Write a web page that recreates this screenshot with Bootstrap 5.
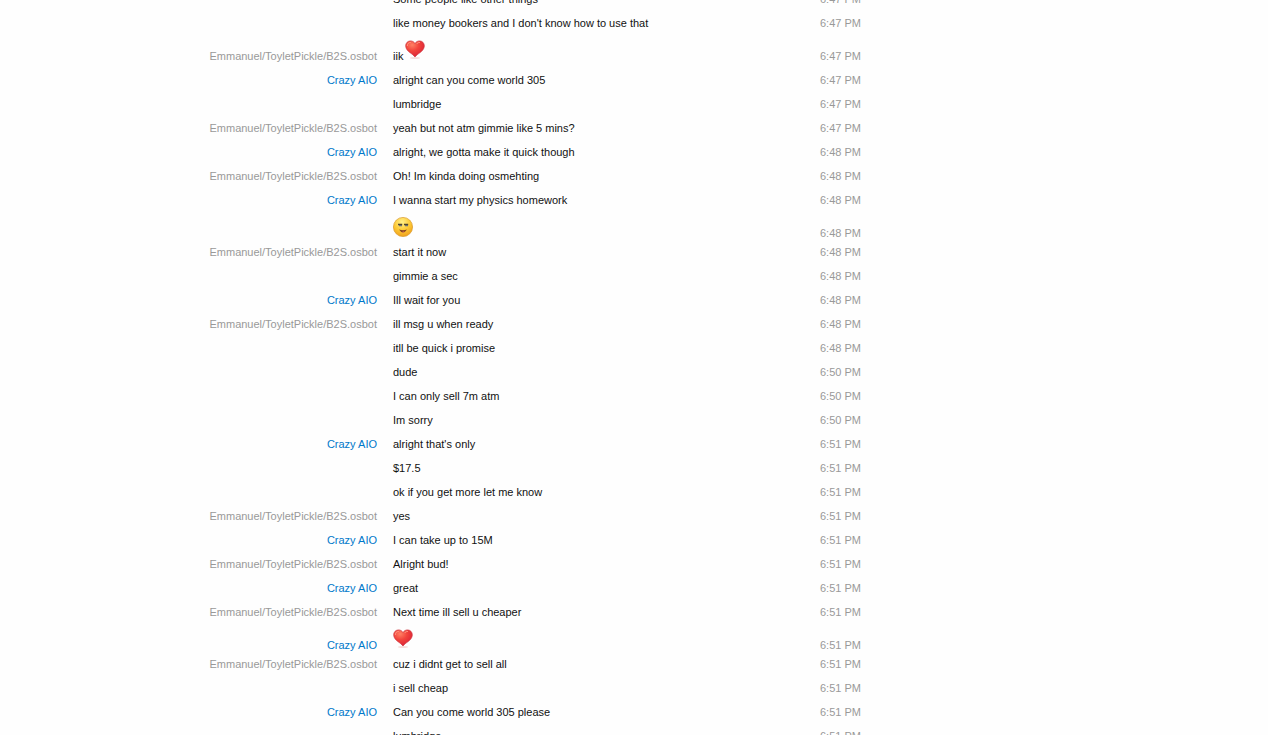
<!DOCTYPE html>
<html lang="en">
<head>
<meta charset="utf-8">
<meta name="viewport" content="width=device-width, initial-scale=1">
<title>Chat history</title>
<link href="https://cdn.jsdelivr.net/npm/bootstrap@5.3.0/dist/css/bootstrap.min.css" rel="stylesheet">
<style>
  body { background: #fefefe; font-family: Tahoma, "Liberation Sans", sans-serif; font-size: 11px; line-height: 14px; color: #111; }
  /* The log is scrolled part of the way into its first message */
  .chat-log { max-width: 860px; margin-top: -13px; }
  .entry { display: grid; grid-template-columns: minmax(0, 377fr) minmax(0, 443fr) 40px; padding: 5px 0; align-items: end; }
  .entry-emote { padding-bottom: 0; }
  .who { color: #999; }
  .who-peer { color: #0078ca; }
  .said { padding-left: 16px; }
  .said-mixed { gap: 2px; }
  .said svg { width: 20px; height: 20px; margin-bottom: 3px; display: block; }
  .stamp { color: #999; }
</style>
</head>
<body>
<svg width="0" height="0" class="position-absolute" aria-hidden="true">
  <defs>
    <radialGradient id="heartFill" cx=".35" cy=".25" r=".8"><stop offset="0" stop-color="#ff8064"/><stop offset=".45" stop-color="#f2443c"/><stop offset="1" stop-color="#d91f35"/></radialGradient>
    <radialGradient id="faceFill" cx=".45" cy=".25" r=".75"><stop offset="0" stop-color="#fff08a"/><stop offset=".55" stop-color="#fdca35"/><stop offset="1" stop-color="#f0a01c"/></radialGradient>
  </defs>
  <symbol id="heart" viewBox="0 0 20 20">
    <ellipse cx="10" cy="18" rx="5" ry="1" fill="#f6dedd"/>
    <path d="M10 17C8 13.800 1 11.500 .7 6.200C.5 2.800 3 .9 5.500 .9C7.600 .9 9.200 2 10 3.600C10.800 2 12.400 .9 14.500 .9C17 .9 19.500 2.800 19.300 6.200C19 11.500 12 13.800 10 17Z" fill="url(#heartFill)" stroke="#cf3a42" stroke-width=".7"/>
    <path d="M2.300 6C2.300 3.500 4 2.300 5.800 2.400M11.700 4C12.400 2.800 13.700 2.300 15 2.500" fill="none" stroke="#ff9c86" stroke-width=".9"/>
  </symbol>
  <symbol id="face" viewBox="0 0 20 20">
    <circle cx="10" cy="10" r="9.600" fill="url(#faceFill)" stroke="#d99a2b" stroke-width=".7"/>
    <path d="M5 7.500H9.200M11 7.500H15.200" stroke="#4f4530" stroke-width="1.300"/>
    <path d="M6 8.700H9M12 8.700H15" stroke="#6b7072" stroke-width="1.200"/>
    <path d="M6 12.500Q10 14 14 12.500Q12 15.600 10 15.600Q8 15.600 6 12.500Z" fill="#854321"/>
    <path d="M9 15Q10.300 14 11.600 14.800Q10.300 16.200 9 15Z" fill="#ef7460"/>
  </symbol>
</svg>
<main class="vh-100 overflow-hidden">
  <ol id="log" class="chat-log list-unstyled mb-0"></ol>
</main>
<script src="https://cdn.jsdelivr.net/npm/bootstrap@5.3.0/dist/js/bootstrap.bundle.min.js"></script>
<script>
  // [sender, message, emoticon, time]; a sender is shown only when it changes
  const E = 'Emmanuel/ToyletPickle/B2S.osbot', C = 'Crazy AIO';
  const entries = [
    ['', 'Some people like other things', '', '6:47 PM'],
    ['', "like money bookers and I don't know how to use that", '', '6:47 PM'],
    [E, 'iik', 'heart', '6:47 PM'],
    [C, 'alright can you come world 305', '', '6:47 PM'],
    ['', 'lumbridge', '', '6:47 PM'],
    [E, 'yeah but not atm gimmie like 5 mins?', '', '6:47 PM'],
    [C, 'alright, we gotta make it quick though', '', '6:48 PM'],
    [E, 'Oh! Im kinda doing osmehting', '', '6:48 PM'],
    [C, 'I wanna start my physics homework', '', '6:48 PM'],
    ['', '', 'face', '6:48 PM'],
    [E, 'start it now', '', '6:48 PM'],
    ['', 'gimmie a sec', '', '6:48 PM'],
    [C, 'Ill wait for you', '', '6:48 PM'],
    [E, 'ill msg u when ready', '', '6:48 PM'],
    ['', 'itll be quick i promise', '', '6:48 PM'],
    ['', 'dude', '', '6:50 PM'],
    ['', 'I can only sell 7m atm', '', '6:50 PM'],
    ['', 'Im sorry', '', '6:50 PM'],
    [C, "alright that's only", '', '6:51 PM'],
    ['', '$17.5', '', '6:51 PM'],
    ['', 'ok if you get more let me know', '', '6:51 PM'],
    [E, 'yes', '', '6:51 PM'],
    [C, 'I can take up to 15M', '', '6:51 PM'],
    [E, 'Alright bud!', '', '6:51 PM'],
    [C, 'great', '', '6:51 PM'],
    [E, 'Next time ill sell u cheaper', '', '6:51 PM'],
    [C, '', 'heart', '6:51 PM'],
    [E, 'cuz i didnt get to sell all', '', '6:51 PM'],
    ['', 'i sell cheap', '', '6:51 PM'],
    [C, 'Can you come world 305 please', '', '6:51 PM'],
    ['', 'lumbridge', '', '6:51 PM']
  ];
  document.getElementById('log').innerHTML = entries.map(([who, text, icon, time]) => `
    <li class="entry ${icon && !text ? 'entry-emote' : ''}">
      <span class="who text-end text-nowrap ${who === C ? 'who-peer' : ''}">${who}</span>
      <span class="said d-flex align-items-end ${text ? 'said-mixed' : ''}">${text ? `<span>${text}</span>` : ''}${icon ? `<svg role="img" aria-label="${icon}"><use href="#${icon}"/></svg>` : ''}</span>
      <time class="stamp text-nowrap">${time}</time>
    </li>`).join('');
</script>
</body>
</html>
